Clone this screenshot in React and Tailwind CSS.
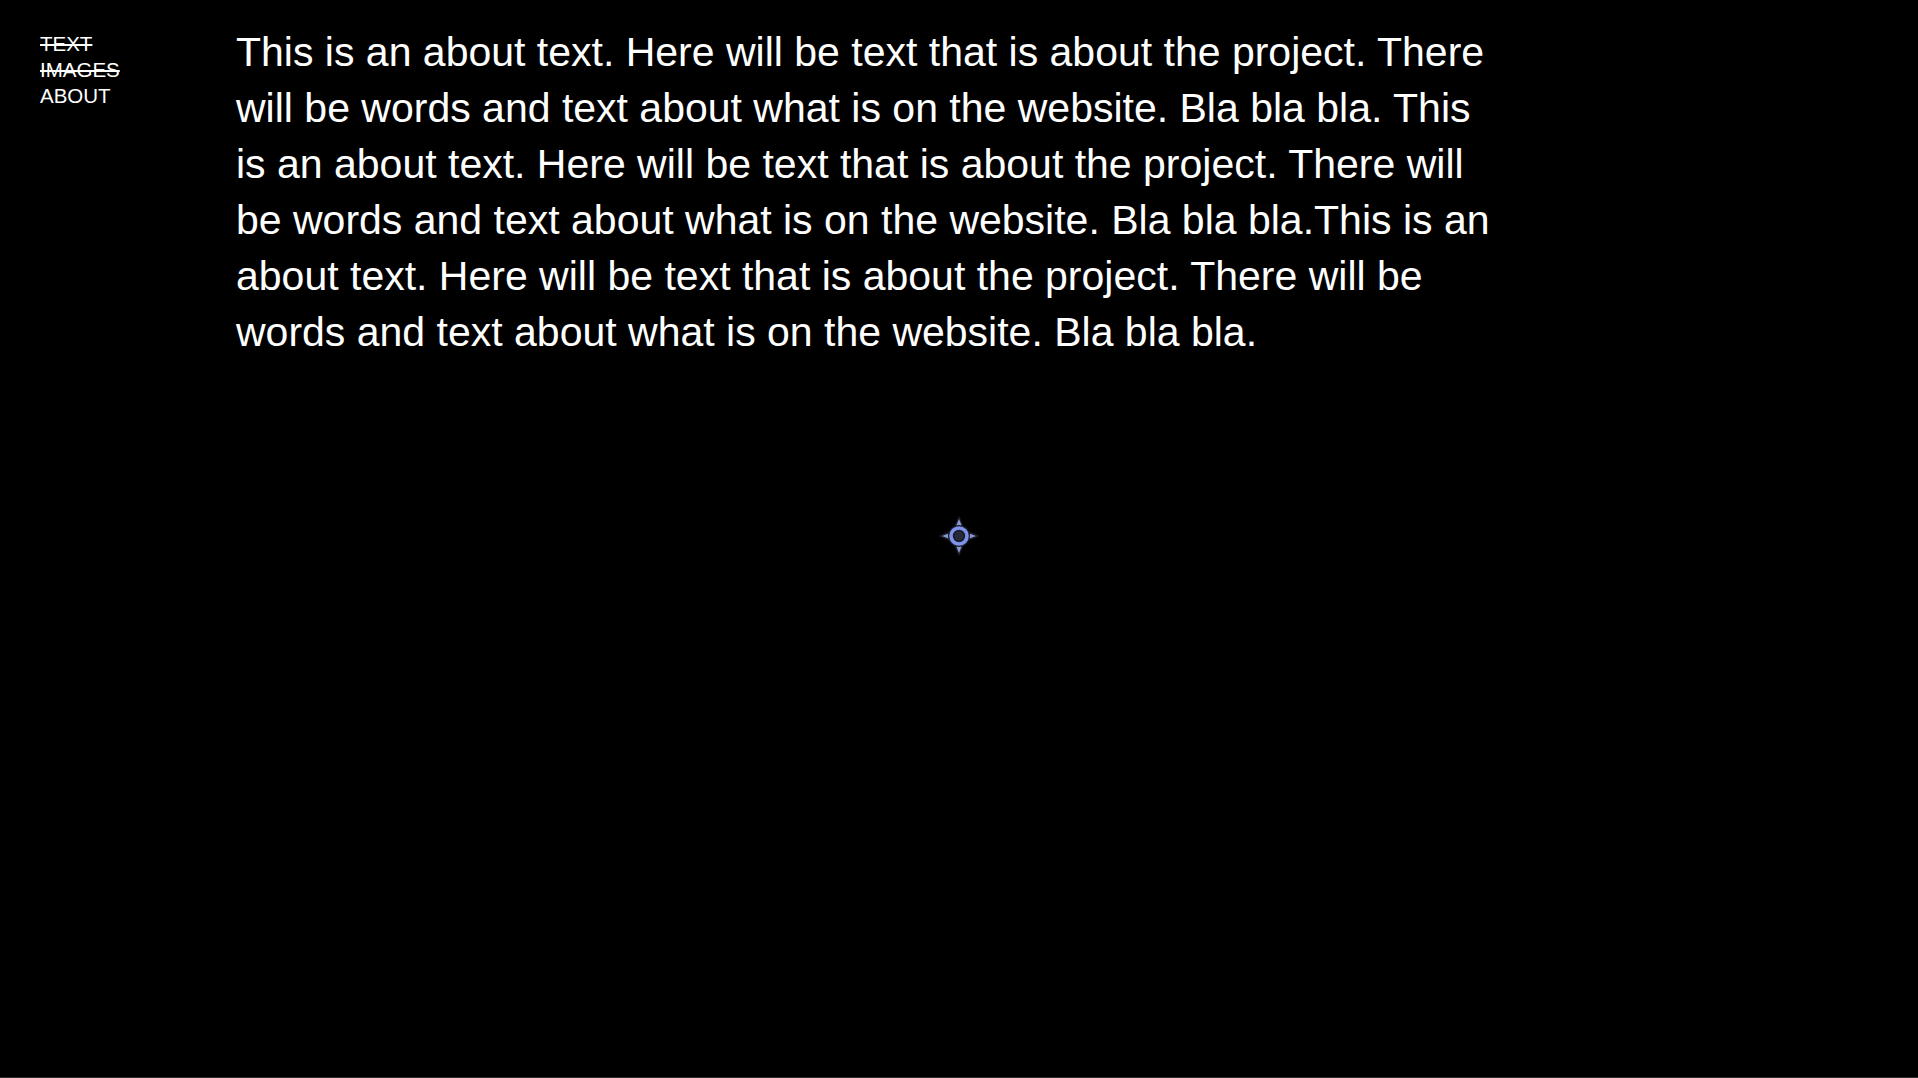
import React from "react";

function Cursor() {
  return (
    <svg
      className="absolute left-[937px] top-[514px]"
      width="44"
      height="44"
      viewBox="0 0 44 44"
    >
      <g stroke="#1a1c28" strokeWidth="1.4" strokeLinejoin="round">
        <path d="M22 3 L26 13 L18 13 Z" fill="#8a98cf" />
        <path d="M22 41 L26 31 L18 31 Z" fill="#8a98cf" />
        <path d="M3 22 L13 18 L13 26 Z" fill="#8a98cf" />
        <path d="M41 22 L31 18 L31 26 Z" fill="#8a98cf" />
      </g>
      <circle cx="22" cy="22" r="11" fill="#1a1c28" />
      <circle cx="22" cy="22" r="8" fill="none" stroke="#7f92ea" strokeWidth="3.6" />
      <circle cx="22" cy="22" r="4.4" fill="#262a3a" />
    </svg>
  );
}

export default function App() {
  return (
    <div
      className="relative h-screen w-full overflow-hidden bg-black text-white border-b border-[#2e2e2e]"
      style={{ fontFamily: '"Liberation Sans", Arial, Helvetica, sans-serif' }}
    >
      <div className="flex">
        <nav className="w-[236px] shrink-0 pl-[40px] pt-[31px] text-[20.5px] leading-[26px]">
          <div className="line-through">TEXT</div>
          <div className="line-through">IMAGES</div>
          <div>ABOUT</div>
        </nav>
        <p className="w-[1265px] pt-[24px] text-[41px] leading-[56px]">
          This is an about text. Here will be text that is about the project. There will be words and text about what is on the website. Bla bla bla. This is an about text. Here will be text that is about the project. There will be words and text about what is on the website. Bla bla bla.This is an about text. Here will be text that is about the project. There will be words and text about what is on the website. Bla bla bla.
        </p>
      </div>
      <Cursor />
    </div>
  );
}
